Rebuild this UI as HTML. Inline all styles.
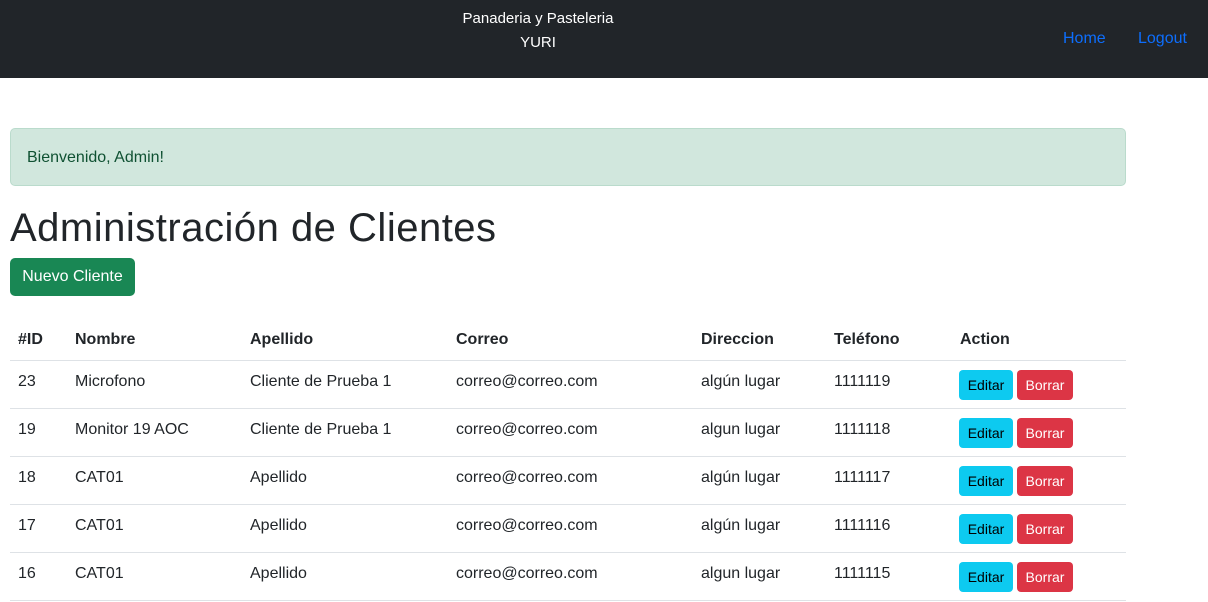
<!DOCTYPE html>
<html><head><meta charset="utf-8"><style>
*{box-sizing:border-box;margin:0;padding:0}
body{width:1208px;height:602px;overflow:hidden;background:#fff;font-family:"Liberation Sans",sans-serif;color:#212529;font-size:16px;position:relative}
.nav{position:absolute;left:0;top:0;width:1208px;height:78px;background:#212529}
.brand{position:absolute;left:438px;width:200px;top:7px;text-align:center;color:#fff;font-size:15px;line-height:24px}
.nav a{position:absolute;top:30px;color:#0d6efd;font-size:16px;text-decoration:none}
.alert{position:absolute;left:10px;top:128px;width:1116px;height:58px;background:#d1e7dd;border:1px solid #badbcc;border-radius:5px;color:#0f5132;padding:19px 16px;font-size:16px;line-height:20px}
h1{position:absolute;left:10px;top:204px;font-size:40px;font-weight:500;line-height:48px;letter-spacing:0.5px}
.nb{position:absolute;left:10px;top:258px;width:125px;height:38px;background:#198754;border-radius:5px;color:#fff;font-size:16px;line-height:38px;text-align:center}
.t{position:absolute;left:10px;top:320px;width:1116px}
.r{position:relative;height:48px;border-bottom:1px solid #dee2e6}
.r span{position:absolute;top:10px;line-height:22px}
.h{height:41px}.h span{top:9px;font-weight:bold}
.b{position:absolute;top:9px;height:30px;border-radius:4px;font-size:14px;line-height:30px;text-align:center}
.e{left:949px;width:54px;background:#0dcaf0;color:#000}
.d{left:1007px;width:56px;background:#dc3545;color:#fff}
</style></head><body>
<div class="nav"><div class="brand">Panaderia y Pasteleria<br>YURI</div><a style="left:1063px">Home</a><a style="left:1138px">Logout</a></div>
<div class="alert">Bienvenido, Admin!</div>
<h1>Administración de Clientes</h1>
<div class="nb">Nuevo Cliente</div>
<div class="t">
<div class="r h"><span style="left:8px">#ID</span><span style="left:65px">Nombre</span><span style="left:240px">Apellido</span><span style="left:446px">Correo</span><span style="left:691px">Direccion</span><span style="left:824px">Teléfono</span><span style="left:950px">Action</span></div>
<div class="r"><span style="left:8px">23</span><span style="left:65px">Microfono</span><span style="left:240px">Cliente de Prueba 1</span><span style="left:446px">correo@correo.com</span><span style="left:691px">algún lugar</span><span style="left:824px">1111119</span><div class="b e">Editar</div><div class="b d">Borrar</div></div>
<div class="r"><span style="left:8px">19</span><span style="left:65px">Monitor 19 AOC</span><span style="left:240px">Cliente de Prueba 1</span><span style="left:446px">correo@correo.com</span><span style="left:691px">algun lugar</span><span style="left:824px">1111118</span><div class="b e">Editar</div><div class="b d">Borrar</div></div>
<div class="r"><span style="left:8px">18</span><span style="left:65px">CAT01</span><span style="left:240px">Apellido</span><span style="left:446px">correo@correo.com</span><span style="left:691px">algún lugar</span><span style="left:824px">1111117</span><div class="b e">Editar</div><div class="b d">Borrar</div></div>
<div class="r"><span style="left:8px">17</span><span style="left:65px">CAT01</span><span style="left:240px">Apellido</span><span style="left:446px">correo@correo.com</span><span style="left:691px">algún lugar</span><span style="left:824px">1111116</span><div class="b e">Editar</div><div class="b d">Borrar</div></div>
<div class="r"><span style="left:8px">16</span><span style="left:65px">CAT01</span><span style="left:240px">Apellido</span><span style="left:446px">correo@correo.com</span><span style="left:691px">algun lugar</span><span style="left:824px">1111115</span><div class="b e">Editar</div><div class="b d">Borrar</div></div>
</div>
</body></html>
